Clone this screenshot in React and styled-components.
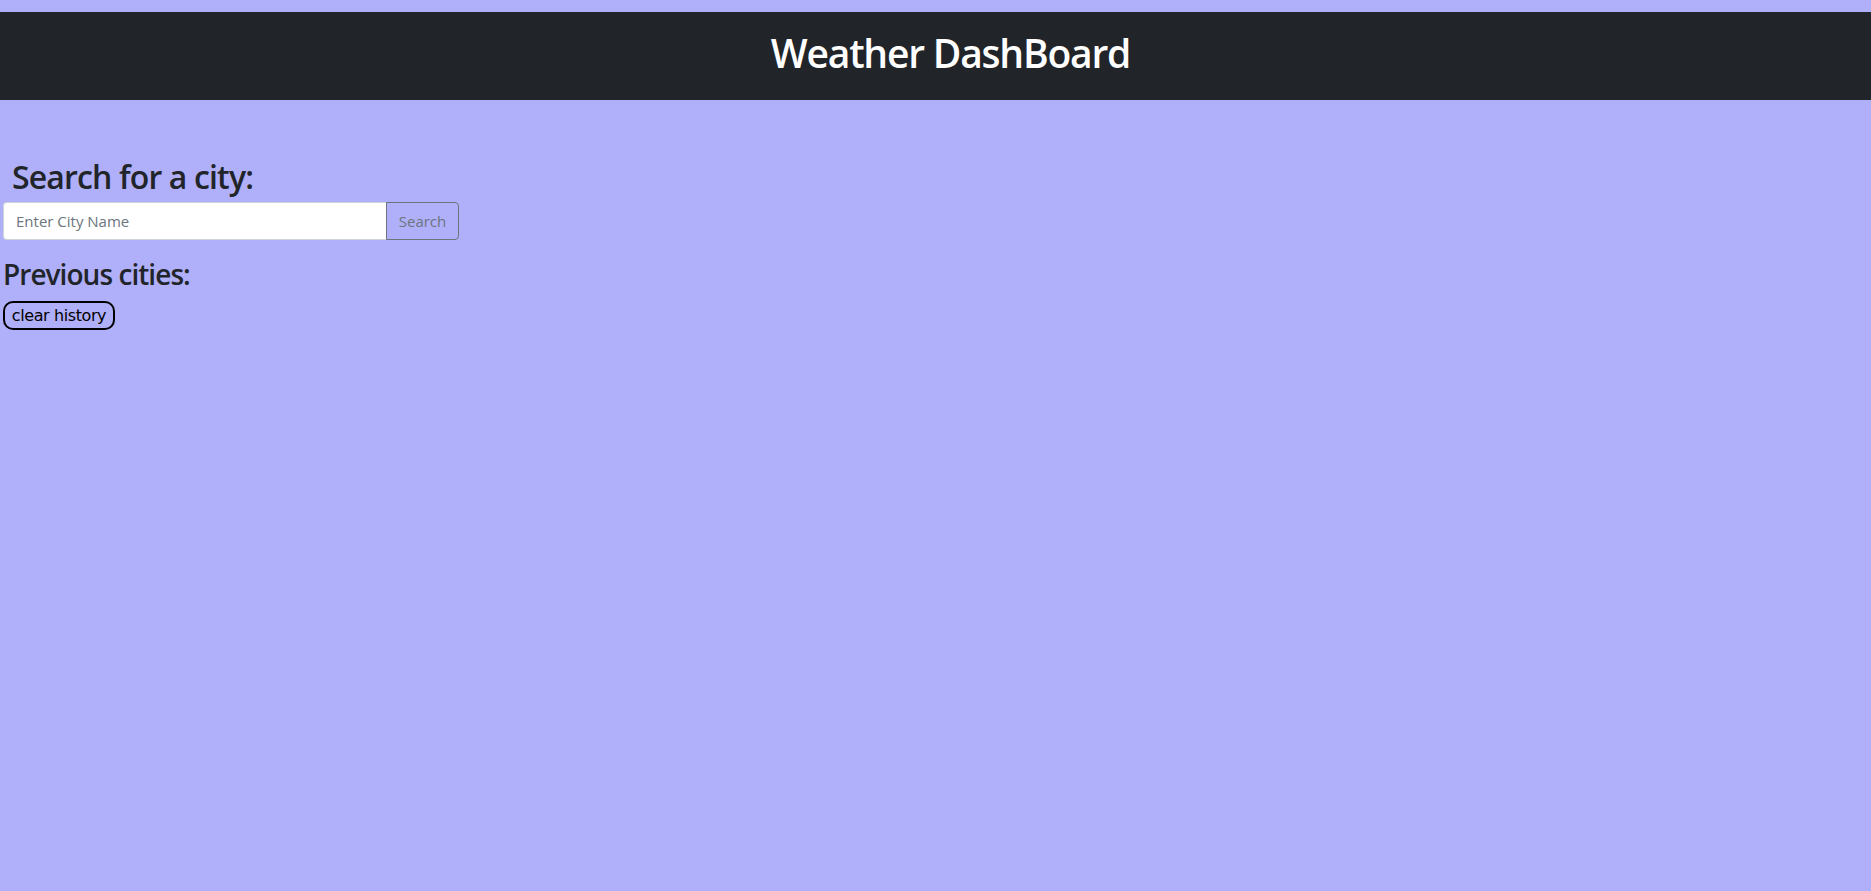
import React from 'react'
import styled, { createGlobalStyle } from 'styled-components'

const GlobalStyle = createGlobalStyle`
    *, *::before, *::after {
        box-sizing: border-box;
    }
    body {
        margin: 0;
        background: #b0affa;
        font-family: "Open Sans", "Noto Sans", sans-serif;
        color: #212529;
    }
`

const Header = styled.header`
    margin-top: 12px;
    height: 88px;
    padding: 18px 0 0 30px;
    background: #212529;
    display: flex;
    justify-content: center;
    align-items: flex-start;
`

const Title = styled.h1`
    margin: 0;
    color: #fff;
    font-size: 39px;
    font-weight: 600;
    line-height: 1.2;
    letter-spacing: -1.2px;
`

const Main = styled.main`
    padding: 0 3px;
    display: flex;
    flex-direction: column;
    align-items: flex-start;
`

const Heading = styled.h2`
    margin: ${p => p.$top}px 0 0 ${p => p.$indent || 0}px;
    font-size: ${p => p.$size}px;
    font-weight: 600;
    line-height: 1.2;
    letter-spacing: ${p => p.$spacing}px;
`

const InputGroup = styled.form`
    display: flex;
    width: 456px;
    height: 38px;
    margin-top: 6px;
`

const CityInput = styled.input`
    flex: 1;
    min-width: 0;
    height: 100%;
    padding: 6px 12px;
    border: 1px solid #ced4da;
    border-right: none;
    border-radius: 4px 0 0 4px;
    background: #fff;
    font-family: inherit;
    font-size: 15px;
    color: #212529;
    outline: none;
    &::placeholder {
        color: #6c757d;
    }
`

const SearchButton = styled.button`
    width: 73px;
    height: 100%;
    border: 1px solid #6c757d;
    border-radius: 0 4px 4px 0;
    background: transparent;
    color: #6c757d;
    font-family: inherit;
    font-size: 15px;
    padding: 0;
    cursor: pointer;
`

const ClearButton = styled.button`
    margin-top: 9px;
    height: 29px;
    width: 112px;
    padding: 0 2px;
    border: 2px solid #000;
    border-radius: 10px;
    background: transparent;
    color: #000;
    font-family: "Comic Sans MS", "DejaVu Sans", sans-serif;
    font-size: 16px;
    letter-spacing: -0.4px;
    cursor: pointer;
`

export default function App() {
    return (
        <>
            <GlobalStyle />
            <Header>
                <Title>Weather DashBoard</Title>
            </Header>
            <Main>
                <Heading as="h2" $size={32} $top={58} $indent={9} $spacing={-0.85}>Search for a city:</Heading>
                <InputGroup onSubmit={e => e.preventDefault()}>
                    <CityInput placeholder="Enter City Name" />
                    <SearchButton type="submit">Search</SearchButton>
                </InputGroup>
                <Heading as="h3" $size={28} $top={18} $spacing={-0.95}>Previous cities:</Heading>
                <ClearButton type="button">clear history</ClearButton>
            </Main>
        </>
    )
}
